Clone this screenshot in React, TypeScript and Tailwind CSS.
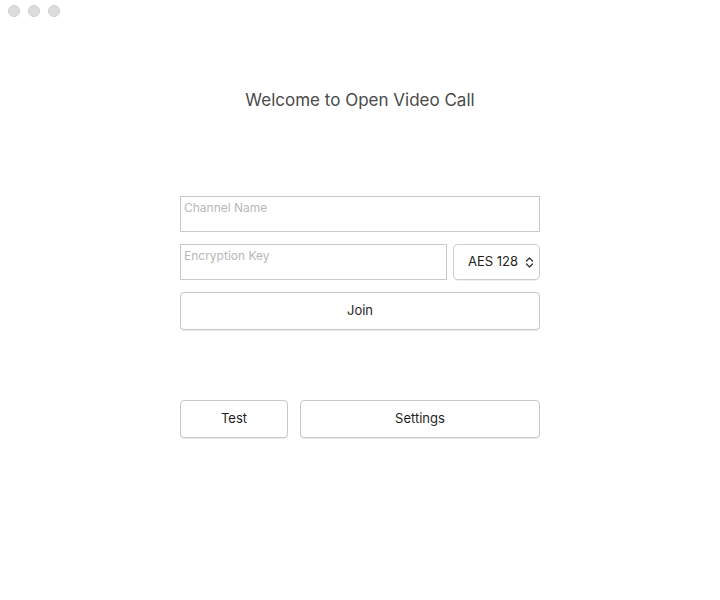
import React from "react";

const font = { fontFamily: "Inter, 'Liberation Sans', sans-serif" };

function TrafficLights() {
  return (
    <div className="flex gap-[8px] pl-[8px] pt-[5px]">
      {[0, 1, 2].map((i) => (
        <span key={i} className="block h-[12px] w-[12px] rounded-full bg-[#dcdcdc] border border-[#d0d0d0]" />
      ))}
    </div>
  );
}

function Field({ placeholder, className }: { placeholder: string; className?: string }) {
  return (
    <div className={"h-[36px] border border-[#c9c9c9] bg-white px-[3px] pt-[3px] text-[12px] leading-[16px] " + (className ?? "")}>
      <span className="block text-[#b8b8b8]">{placeholder}</span>
    </div>
  );
}

function Button({ label, className }: { label: string; className?: string }) {
  return (
    <button
      className={
        "flex h-[38px] items-center justify-center rounded-[4px] border border-[#c8c8c8] bg-white text-[13px] text-[#1e1e1e] shadow-[0_1px_0_rgba(0,0,0,0.08)] " +
        (className ?? "")
      }
    >
      {label}
    </button>
  );
}

export default function App() {
  return (
    <div className="h-[600px] w-[720px] bg-white" style={font}>
      <TrafficLights />
      <h1 className="mt-[72px] text-center text-[17px] leading-[22px] text-[#4a4a4a]">Welcome to Open Video Call</h1>

      <div className="mx-auto mt-[85px] flex w-[360px] flex-col">
        <Field placeholder="Channel Name" />
        <div className="mt-[12px] flex gap-[6px]">
          <Field placeholder="Encryption Key" className="flex-1" />
          <div className="flex h-[36px] w-[87px] items-center justify-between rounded-[5px] border border-[#cdcdcd] pl-[14px] pr-[5px] text-[13px] text-[#1e1e1e] shadow-[0_1px_0_rgba(0,0,0,0.06)]">
            <span>AES 128</span>
            <svg width="9" height="13" viewBox="0 0 9 13" fill="none" stroke="#333" strokeWidth="1.3" strokeLinecap="round" strokeLinejoin="round">
              <path d="M1.5 5 L4.5 2 L7.5 5" />
              <path d="M1.5 8 L4.5 11 L7.5 8" />
            </svg>
          </div>
        </div>
        <Button label="Join" className="mt-[12px] w-full" />

        <div className="mt-[70px] flex gap-[12px]">
          <Button label="Test" className="w-[108px]" />
          <Button label="Settings" className="flex-1" />
        </div>
      </div>
    </div>
  );
}
